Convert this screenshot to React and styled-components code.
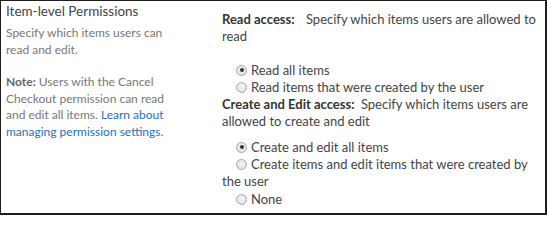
import styled, { createGlobalStyle } from "styled-components";

const GlobalStyle = createGlobalStyle`
  html, body {
    margin: 0;
    padding: 0;
    background: #ffffff;
  }
  body {
    font-family: Lato, "Open Sans", sans-serif;
  }
`;

const Frame = styled.div`
  box-sizing: border-box;
  width: 547px;
  height: 215px;
  border: 1px solid #1e1e1e;
  border-right-width: 2px;
  border-bottom-width: 2px;
  display: grid;
  grid-template-columns: 214px 1fr;
  background: #fff;
  overflow: hidden;
`;

const Aside = styled.div`
  padding: 2px 0 0 5px;
  width: 176px;
`;

const AsideTitle = styled.h3`
  margin: 0 0 5px;
  font-size: 13.5px;
  font-weight: 400;
  line-height: 17px;
  color: #444;
`;

const AsideText = styled.p`
  margin: 0 0 16px;
  font-size: 12px;
  line-height: 16.5px;
  color: #777;

  strong {
    font-weight: 700;
    color: #666;
  }
`;

const Link = styled.a`
  color: #2a6ebb;
  text-decoration: none;
`;

const Main = styled.div`
  padding: 10px 6px 0 7px;
  font-size: 13px;
  line-height: 17.3px;
  color: #444;
`;

const Prompt = styled.div`
  margin-bottom: ${(p) => p.$gap || 0}px;

  strong {
    font-weight: 700;
    color: #333;
    margin-right: ${(p) => p.$space || 0}px;
  }
`;

const Options = styled.div`
  margin-bottom: ${(p) => p.$gap || 0}px;
`;

const Option = styled.label`
  display: block;
  text-indent: 14px;
`;

const Radio = styled.span`
  display: inline-block;
  box-sizing: border-box;
  width: 11px;
  height: 11px;
  margin-right: 4px;
  border-radius: 50%;
  border: 1px solid #a8a8a8;
  background: radial-gradient(circle at 50% 40%, #f4f4f4 0%, #dcdcdc 100%);
  vertical-align: -1px;
  text-indent: 0;
  position: relative;

  &::after {
    content: "";
    display: ${(p) => (p.$checked ? "block" : "none")};
    position: absolute;
    left: 2.5px;
    top: 2.5px;
    width: 4px;
    height: 4px;
    border-radius: 50%;
    background: #333;
  }
`;

const readOptions = [
  { label: "Read all items", checked: true },
  { label: "Read items that were created by the user" },
];

const editOptions = [
  { label: "Create and edit all items", checked: true },
  { label: "Create items and edit items that were created by the user" },
  { label: "None" },
];

function OptionList({ items, gap }) {
  return (
    <Options $gap={gap}>
      {items.map((o) => (
        <Option key={o.label}>
          <Radio $checked={o.checked} />
          {o.label}
        </Option>
      ))}
    </Options>
  );
}

export default function App() {
  return (
    <>
      <GlobalStyle />
      <Frame>
        <Aside>
          <AsideTitle>Item-level Permissions</AsideTitle>
          <AsideText>Specify which items users can read and edit.</AsideText>
          <AsideText>
            <strong>Note:</strong> Users with the Cancel Checkout permission can
            read and edit all items.{" "}
            <Link href="#">Learn about managing permission settings.</Link>
          </AsideText>
        </Aside>
        <Main>
          <Prompt $gap={16} $space={8}>
            <strong>Read access:</strong> Specify which items users are
            allowed to read
          </Prompt>
          <OptionList items={readOptions} />
          <Prompt $gap={8} $space={3}>
            <strong>Create and Edit access:</strong> Specify which items users
            are allowed to create and edit
          </Prompt>
          <OptionList items={editOptions} />
        </Main>
      </Frame>
    </>
  );
}
